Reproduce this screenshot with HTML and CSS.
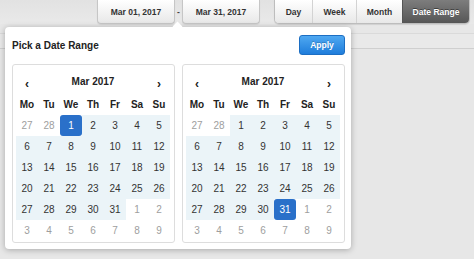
FILE: index.html
```html
<!DOCTYPE html>
<html>
<head>
<meta charset="utf-8">
<link rel="stylesheet" href="styles.css">
</head>
<body>
<div class="toolbar">
  <div class="btn date">Mar 01, 2017</div>
  <div class="dash">-</div>
  <div class="btn date">Mar 31, 2017</div>
  <div class="seg">
    <div class="seg-item w-day">Day</div>
    <div class="seg-item w-week">Week</div>
    <div class="seg-item w-month">Month</div>
    <div class="seg-item w-range active">Date Range</div>
  </div>
</div>
<div class="strip"></div>

<div class="popup">
  <div class="pointer"></div>
  <div class="head">
    <h2 class="title">Pick a Date Range</h2>
    <div class="apply">Apply</div>
  </div>
  <div class="cals">
    <div class="cal">
      <div class="cal-head">
        <span class="nav">‹</span>
        <span class="month">Mar 2017</span>
        <span class="nav">›</span>
      </div>
      <div class="grid">
        <span class="dow">Mo</span><span class="dow">Tu</span><span class="dow">We</span><span class="dow">Th</span><span class="dow">Fr</span><span class="dow">Sa</span><span class="dow">Su</span>
        <span class="off">27</span><span class="off">28</span><span class="sel">1</span><span class="in">2</span><span class="in">3</span><span class="in">4</span><span class="in">5</span>
        <span class="in">6</span><span class="in">7</span><span class="in">8</span><span class="in">9</span><span class="in">10</span><span class="in">11</span><span class="in">12</span>
        <span class="in">13</span><span class="in">14</span><span class="in">15</span><span class="in">16</span><span class="in">17</span><span class="in">18</span><span class="in">19</span>
        <span class="in">20</span><span class="in">21</span><span class="in">22</span><span class="in">23</span><span class="in">24</span><span class="in">25</span><span class="in">26</span>
        <span class="in">27</span><span class="in">28</span><span class="in">29</span><span class="in">30</span><span class="in">31</span><span class="off">1</span><span class="off">2</span>
        <span class="off">3</span><span class="off">4</span><span class="off">5</span><span class="off">6</span><span class="off">7</span><span class="off">8</span><span class="off">9</span>
      </div>
    </div>
    <div class="cal">
      <div class="cal-head">
        <span class="nav">‹</span>
        <span class="month">Mar 2017</span>
        <span class="nav">›</span>
      </div>
      <div class="grid">
        <span class="dow">Mo</span><span class="dow">Tu</span><span class="dow">We</span><span class="dow">Th</span><span class="dow">Fr</span><span class="dow">Sa</span><span class="dow">Su</span>
        <span class="off">27</span><span class="off">28</span><span class="in">1</span><span class="in">2</span><span class="in">3</span><span class="in">4</span><span class="in">5</span>
        <span class="in">6</span><span class="in">7</span><span class="in">8</span><span class="in">9</span><span class="in">10</span><span class="in">11</span><span class="in">12</span>
        <span class="in">13</span><span class="in">14</span><span class="in">15</span><span class="in">16</span><span class="in">17</span><span class="in">18</span><span class="in">19</span>
        <span class="in">20</span><span class="in">21</span><span class="in">22</span><span class="in">23</span><span class="in">24</span><span class="in">25</span><span class="in">26</span>
        <span class="in">27</span><span class="in">28</span><span class="in">29</span><span class="in">30</span><span class="sel">31</span><span class="off">1</span><span class="off">2</span>
        <span class="off">3</span><span class="off">4</span><span class="off">5</span><span class="off">6</span><span class="off">7</span><span class="off">8</span><span class="off">9</span>
      </div>
    </div>
  </div>
</div>
</body>
</html>
```

FILE: styles.css
```css
html, body {
  margin: 0;
  padding: 0;
}
body {
  background: #e7e7e7;
  font-family: "Liberation Sans", Arial, Helvetica, sans-serif;
  width: 474px;
  height: 259px;
  overflow: hidden;
  position: relative;
  color: #333;
}

.toolbar {
  display: flex;
  height: 24px;
  padding-left: 97px;
  background: linear-gradient(#e2e2e2, #e9e9e9);
}

.btn {
  box-sizing: border-box;
  height: 24px;
  border: 1px solid #c6c6c6;
  border-top: none;
  border-radius: 0 0 4px 4px;
  background: linear-gradient(#ffffff, #e8e8e8);
  box-shadow: 0 1px 1px rgba(0, 0, 0, 0.08);
  font-size: 8.5px;
  font-weight: bold;
  color: #333;
  display: flex;
  align-items: center;
  justify-content: center;
}
.date {
  width: 78px;
}
.dash {
  width: 7px;
  text-align: center;
  font-size: 8.5px;
  font-weight: bold;
  line-height: 24px;
  color: #444;
}

.seg {
  display: flex;
  margin-left: 14px;
  width: 196px;
  height: 24px;
  box-sizing: border-box;
  border: 1px solid #bdbdbd;
  border-top: none;
  border-radius: 0 0 5px 5px;
  overflow: hidden;
  box-shadow: 0 1px 1px rgba(0, 0, 0, 0.1);
}
.seg-item {
  box-sizing: border-box;
  height: 100%;
  display: flex;
  align-items: center;
  justify-content: center;
  font-size: 8.5px;
  font-weight: bold;
  color: #333;
  background: linear-gradient(#ffffff, #e8e8e8);
  border-left: 1px solid #d3d3d3;
}
.seg-item:first-child {
  border-left: none;
}
.w-day { width: 37px; }
.w-week { width: 44px; }
.w-month { width: 46px; }
.w-range { width: 67px; }
.seg .active {
  background: linear-gradient(#7d7d7d, #565656);
  color: #fff;
  border-left-color: #555;
  text-shadow: 0 -1px 0 rgba(0, 0, 0, 0.45);
}

.strip {
  margin-top: 9px;
  height: 14px;
  border-top: 1px solid #dadada;
  border-bottom: 1px solid #cfcfcf;
  background: #e9e9e9;
}

.popup {
  position: absolute;
  left: 5px;
  top: 27px;
  width: 346px;
  height: 222px;
  box-sizing: border-box;
  padding: 8px 6px 6px 7px;
  background: #fff;
  border-radius: 4px;
  box-shadow: 0 1px 6px rgba(0, 0, 0, 0.28);
}
.pointer {
  position: absolute;
  left: 169px;
  top: -4px;
  width: 7px;
  height: 7px;
  background: #fff;
  transform: rotate(45deg);
}

.head {
  display: flex;
  justify-content: space-between;
  align-items: center;
  height: 20px;
  margin-bottom: 9px;
  position: relative;
}
.title {
  margin: 0;
  font-size: 10px;
  font-weight: bold;
  color: #222;
}
.apply {
  width: 46px;
  height: 20px;
  box-sizing: border-box;
  border: 1px solid #1c6ec3;
  border-radius: 3px;
  background: linear-gradient(#4fa8f1, #1f7ddb);
  color: #fff;
  font-size: 8.5px;
  font-weight: bold;
  display: flex;
  align-items: center;
  justify-content: center;
  text-shadow: 0 -1px 0 rgba(0, 0, 0, 0.2);
}

.cals {
  display: flex;
  gap: 7px;
}
.cal {
  width: 163px;
  height: 179px;
  box-sizing: border-box;
  border: 1px solid #dddddd;
  border-radius: 3px;
  padding: 4px 3px 1px 3px;
}
.cal-head {
  display: grid;
  grid-template-columns: repeat(7, 22px);
  height: 25px;
  align-items: center;
}
.nav {
  text-align: center;
  font-size: 12px;
  font-weight: bold;
  color: #222;
  padding-top: 4px;
}
.month {
  grid-column: 2 / 7;
  text-align: center;
  font-size: 10px;
  font-weight: bold;
  color: #222;
}

.grid {
  display: grid;
  grid-template-columns: repeat(7, 22px);
  grid-auto-rows: 21px;
}
.grid span {
  display: flex;
  align-items: center;
  justify-content: center;
  font-size: 10px;
  color: #333;
}
.grid .dow {
  font-weight: bold;
  color: #222;
}
.grid .off {
  color: #9e9e9e;
}
.grid .in {
  background: #ebf4f8;
}
.grid .sel {
  background: #2a70c9;
  color: #fff;
  border-radius: 3px;
}
```
